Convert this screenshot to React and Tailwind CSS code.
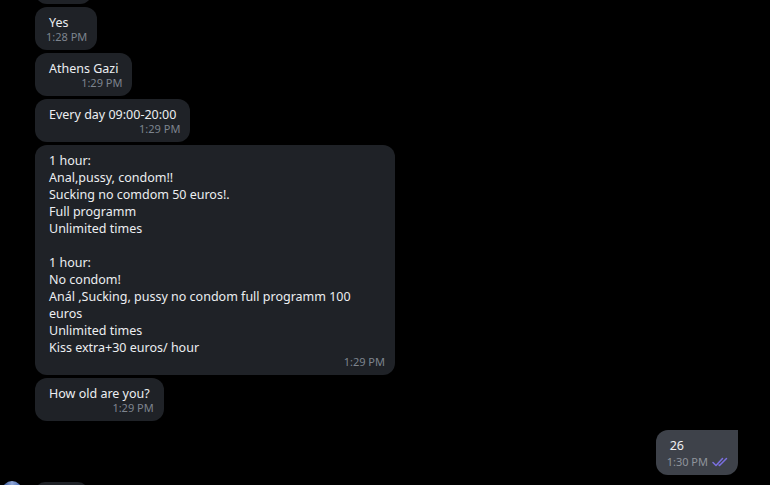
import React from 'react';

const font = { fontFamily: '"Noto Sans", "Open Sans", sans-serif' };

const Check = () => (
  <svg width="17" height="10" viewBox="0 0 17 10" fill="none" className="ml-[4px]">
    <path d="M1 5.5 L4 8.5 L10.5 1.5" stroke="#7a6fe0" strokeWidth="1.5" strokeLinecap="round" strokeLinejoin="round" />
    <path d="M7 8 L7.5 8.5 L14.5 1.5" stroke="#7a6fe0" strokeWidth="1.5" strokeLinecap="round" strokeLinejoin="round" />
  </svg>
);

const Incoming = ({ lines, time, wide }) => (
  <div className={`${wide ? 'w-[360px]' : 'w-fit'} rounded-[12px] bg-[#1f2227] pt-[7px] pb-[7px] px-[14px]`}>
    <div className="text-[12.5px] leading-[17px] text-[#eceef1] whitespace-pre">
      {lines.map((l, i) => (
        <div key={i} className="h-[17px]">{l}</div>
      ))}
    </div>
    <div className="-ml-[3px] -mr-[4px] text-right text-[11px] leading-[12px] text-[#7d848e]">{time}</div>
  </div>
);

const msgs = [
  { lines: ['Yes'], time: '1:28 PM' },
  { lines: ['Athens Gazi'], time: '1:29 PM' },
  { lines: ['Every day 09:00-20:00'], time: '1:29 PM' },
  {
    lines: [
      '1 hour:',
      'Anal,pussy, condom!!',
      'Sucking no comdom 50 euros!.',
      'Full programm',
      'Unlimited times',
      '',
      '1 hour:',
      'No condom!',
      'Anál ,Sucking, pussy no condom full programm 100',
      'euros',
      'Unlimited times',
      'Kiss extra+30 euros/ hour',
    ],
    time: '1:29 PM',
    wide: true,
  },
  { lines: ['How old are you?'], time: '1:29 PM' },
];

export default function App() {
  return (
    <div className="w-[770px] h-[485px] overflow-hidden bg-black" style={font}>
      <div className="flex flex-col gap-[3px] pl-[35px] -mt-[39px]">
        <div className="w-[57px] h-[43px] rounded-[12px] bg-[#1f2227]" />
        {msgs.map((m, i) => (
          <Incoming key={i} lines={m.lines} time={m.time} wide={m.wide} />
        ))}
      </div>

      <div className="flex justify-end pr-[32px] mt-[9px]">
        <div className="rounded-[12px] rounded-tr-none bg-[#3e424a] pl-[14px] pr-[9px] pt-[7px] pb-[7px]">
          <div className="text-[12.5px] leading-[17px] text-[#f0f1f3]">26</div>
          <div className="-ml-[3px] mt-[2px] flex items-center text-[11px] leading-[12px] text-[#8f949c]">
            <span>1:30 PM</span>
            <Check />
          </div>
        </div>
      </div>

      <div className="flex items-start gap-[13px] pl-[2px] mt-[6px]">
        <div className="w-[20px] h-[20px] rounded-full bg-gradient-to-r from-[#2a4a8a] via-[#8fa6d6] to-[#3a5ea8]" />
        <div className="w-[53px] h-[20px] mt-[1px] rounded-[12px] bg-[#1f2227]" />
      </div>
    </div>
  );
}
